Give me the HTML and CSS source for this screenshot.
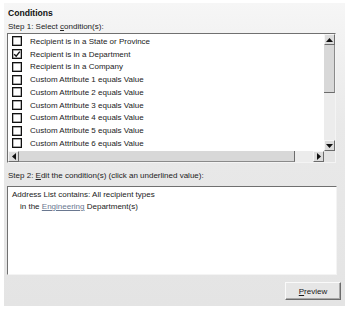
FILE: index.html
```html
<!DOCTYPE html>
<html lang="en">
<head>
  <meta charset="UTF-8">
  <title>Conditions</title>
  <link rel="stylesheet" href="styles.css">
</head>
<body>
  <div class="panel">
    <div class="title">Conditions</div>
    <div class="label">Step 1: Select <u>c</u>ondition(s):</div>

    <div class="listbox">
      <div class="list-main">
        <ul class="list">
          <li><span class="box"></span>Recipient is in a State or Province</li>
          <li><span class="box"><svg viewBox="0 0 8 8" width="8" height="8"><path d="M1.2 4.2 L3.2 6.2 L6.8 1.6" fill="none" stroke="#111" stroke-width="1.4"/></svg></span>Recipient is in a Department</li>
          <li><span class="box"></span>Recipient is in a Company</li>
          <li><span class="box"></span>Custom Attribute 1 equals Value</li>
          <li><span class="box"></span>Custom Attribute 2 equals Value</li>
          <li><span class="box"></span>Custom Attribute 3 equals Value</li>
          <li><span class="box"></span>Custom Attribute 4 equals Value</li>
          <li><span class="box"></span>Custom Attribute 5 equals Value</li>
          <li><span class="box"></span>Custom Attribute 6 equals Value</li>
        </ul>
        <div class="vscroll">
          <div class="sbtn"><svg viewBox="0 0 7 4" width="7" height="4"><path d="M0 4 L3.5 0 L7 4 Z" fill="#111"/></svg></div>
          <div class="vthumb"></div>
          <div class="vtrack"></div>
          <div class="sbtn"><svg viewBox="0 0 7 4" width="7" height="4"><path d="M0 0 L3.5 4 L7 0 Z" fill="#111"/></svg></div>
        </div>
      </div>
      <div class="hscroll">
        <div class="sbtn"><svg viewBox="0 0 4 7" width="4" height="7"><path d="M4 0 L0 3.5 L4 7 Z" fill="#111"/></svg></div>
        <div class="hthumb"></div>
        <div class="htrack"></div>
        <div class="sbtn"><svg viewBox="0 0 4 7" width="4" height="7"><path d="M0 0 L4 3.5 L0 7 Z" fill="#111"/></svg></div>
        <div class="corner"></div>
      </div>
    </div>

    <div class="label step2">Step 2: <u>E</u>dit the condition(s) (click an underlined value):</div>
    <div class="editbox">
      <div>Address List contains: All recipient types</div>
      <div class="indent">in the <a class="link" href="#">Engineering</a> Department(s)</div>
    </div>

    <div class="actions">
      <button class="btn"><u>P</u>review</button>
    </div>
  </div>
</body>
</html>
```

FILE: styles.css
```css
body {
  margin: 0;
  background: #fff;
  font-family: "Liberation Sans", Arial, sans-serif;
  font-size: 8px;
  color: #222;
}
.panel {
  margin: 3px 0 0 4px;
  width: 341px;
  height: 303px;
  box-sizing: border-box;
  padding: 5px 0 0 3px;
  background: linear-gradient(#f6f6f6, #e9e9e9 40%, #e4e4e4);
}
.title {
  font-weight: bold;
  font-size: 8.6px;
  line-height: 10px;
  padding-left: 1px;
  color: #111;
}
.label {
  line-height: 10px;
  margin-top: 4px;
  padding-left: 1px;
}
.listbox {
  margin-top: 1px;
  width: 329px;
  height: 130px;
  box-sizing: border-box;
  border: 1px solid;
  border-color: #707070 #f4f4f4 #f4f4f4 #707070;
  background: #fff;
  display: flex;
  flex-direction: column;
}
.list-main {
  flex: 1;
  display: flex;
  min-height: 0;
}
.list {
  flex: 1;
  list-style: none;
  margin: 0;
  padding: 1px 0 0 4px;
}
.list li {
  height: 12.75px;
  display: flex;
  align-items: center;
  white-space: nowrap;
}
.box {
  width: 8px;
  height: 8px;
  border: 1px solid #111;
  box-shadow: inset 0 0 0 0.4px #555;
  margin-right: 8px;
  display: flex;
  align-items: center;
  justify-content: center;
  background: #fff;
}
.vscroll {
  width: 11px;
  display: flex;
  flex-direction: column;
  background: #ececec;
}
.sbtn {
  width: 11px;
  height: 11px;
  box-sizing: border-box;
  flex: none;
  background: #dcdcdc;
  border: 1px solid;
  border-color: #f6f6f6 #6c6c6c #6c6c6c #f6f6f6;
  display: flex;
  align-items: center;
  justify-content: center;
}
.vthumb {
  height: 47px;
  background: #d8d8d8;
  border-bottom: 1px solid #6c6c6c;
  border-right: 1px solid #8a8a8a;
}
.vtrack {
  flex: 1;
}
.hscroll {
  height: 11px;
  display: flex;
  background: #ececec;
}
.hthumb {
  width: 275px;
  background: #d8d8d8;
  border-right: 1px solid #6c6c6c;
  border-bottom: 1px solid #8a8a8a;
}
.htrack {
  flex: 1;
}
.corner {
  width: 11px;
  background: #e4e4e4;
}
.step2 {
  margin-top: 8px;
}
.editbox {
  margin-top: 5px;
  width: 330px;
  height: 89px;
  box-sizing: border-box;
  border: 1px solid;
  border-color: #707070 #f4f4f4 #f4f4f4 #707070;
  background: #fff;
  padding: 2px 0 0 4px;
  line-height: 12px;
}
.indent {
  padding-left: 8px;
}
.link {
  color: #6a7890;
  text-decoration: underline;
}
.actions {
  display: flex;
  justify-content: flex-end;
  width: 334px;
  margin-top: 7px;
}
.btn {
  width: 56px;
  height: 18px;
  font-family: inherit;
  font-size: 8px;
  color: #1a1a1a;
  background: #e6e6e6;
  border: 1px solid;
  border-color: #fafafa #6c6c6c #6c6c6c #fafafa;
  box-shadow: inset -1px -1px 0 #a8a8a8;
  padding: 0;
}
```
